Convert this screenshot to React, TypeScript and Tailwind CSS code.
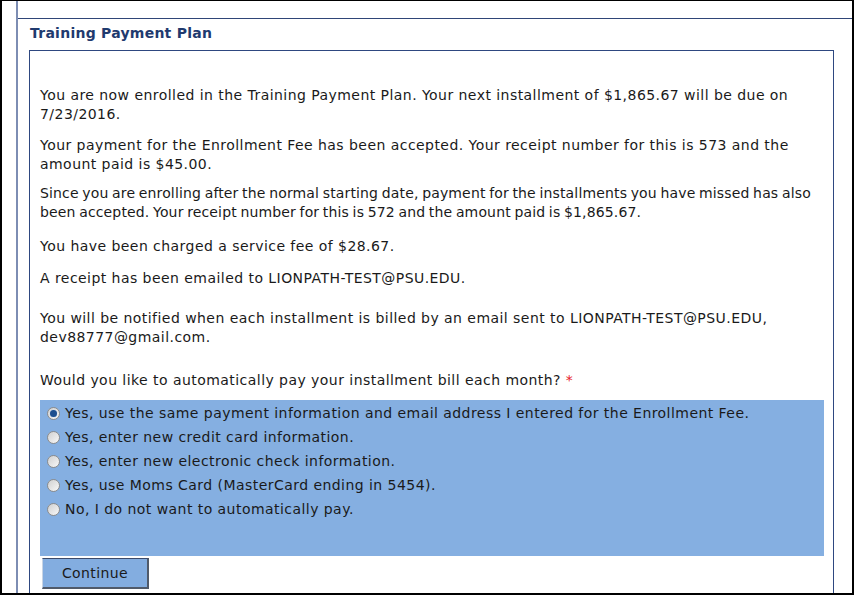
import React from "react";

const font = { fontFamily: '"DejaVu Sans", Verdana, sans-serif' };

const options = [
  "Yes, use the same payment information and email address I entered for the Enrollment Fee.",
  "Yes, enter new credit card information.",
  "Yes, enter new electronic check information.",
  "Yes, use Moms Card (MasterCard ending in 5454).",
  "No, I do not want to automatically pay.",
];

function Radio({ checked }: { checked: boolean }) {
  return (
    <span className="relative inline-flex h-[13px] w-[13px] shrink-0 items-center justify-center rounded-full border border-[#8c8c8c] bg-gradient-to-br from-[#d0d0d0] to-[#f8f8f8]">
      {checked && <span className="h-[7px] w-[7px] rounded-full bg-[#1d4f8f] shadow-[0_0_1px_#9fc4ee]" />}
    </span>
  );
}

export default function App() {
  return (
    <div className="h-[595px] w-[854px] overflow-hidden border-b-2 border-l-2 border-r-2 border-t border-black bg-white" style={font}>
      <div className="flex h-full pl-[14px]">
        <div className="flex h-full flex-1 flex-col border-l-2 border-[#7d8db3]">
          <div className="h-[18px] border-b border-[#2f4577]" />
          <h1 className="pl-[12px] pt-[5px] text-[14px] font-bold leading-[18px] tracking-[0.25px] text-[#1f3a6e]">
            Training Payment Plan
          </h1>
          <div className="mt-[8px] ml-[11px] w-[805px] flex-1 border-l border-r border-t border-[#2e4880] pl-[10px] pr-[9px] pt-[35px] text-[14px] leading-[19px] tracking-[0.45px] text-[#1a1a1a]">
            <p>
              You are now enrolled in the Training Payment Plan. Your next installment of $1,865.67 will be due on 7/23/2016.
            </p>
            <p className="mt-[12px]">
              Your payment for the Enrollment Fee has been accepted. Your receipt number for this is 573 and the amount paid is $45.00.
            </p>
            <p className="mt-[10px] tracking-[0.15px] [word-spacing:-1px]">
              Since you are enrolling after the normal starting date, payment for the installments you have missed has also been accepted. Your receipt number for this is 572 and the amount paid is $1,865.67.
            </p>
            <p className="mt-[15px]">You have been charged a service fee of $28.67.</p>
            <p className="mt-[13px]">A receipt has been emailed to LIONPATH-TEST@PSU.EDU.</p>
            <p className="mt-[21px]">
              You will be notified when each installment is billed by an email sent to LIONPATH-TEST@PSU.EDU, dev88777@gmail.com.
            </p>
            <p className="mt-[24px]">
              Would you like to automatically pay your installment bill each month? <span className="text-[#e8202a]">*</span>
            </p>
            <div className="mt-[10px] bg-[#85afe1] pt-[1px] pb-[35px]">
              {options.map((o, i) => (
                <div key={i} className="flex h-[24px] items-center gap-[5px] pl-[7px]">
                  <Radio checked={i === 0} />
                  <span>{o}</span>
                </div>
              ))}
            </div>
            <button className="ml-[2px] mt-[2px] h-[31px] w-[107px] border-b-2 border-l border-r-2 border-t border-b-[#505a6a] border-l-[#c8d4e4] border-r-[#505a6a] border-t-[#3c4a6a] bg-[#83ade0] text-[14px] tracking-[0.4px] text-[#1a1a1a]">
              Continue
            </button>
          </div>
        </div>
      </div>
    </div>
  );
}
